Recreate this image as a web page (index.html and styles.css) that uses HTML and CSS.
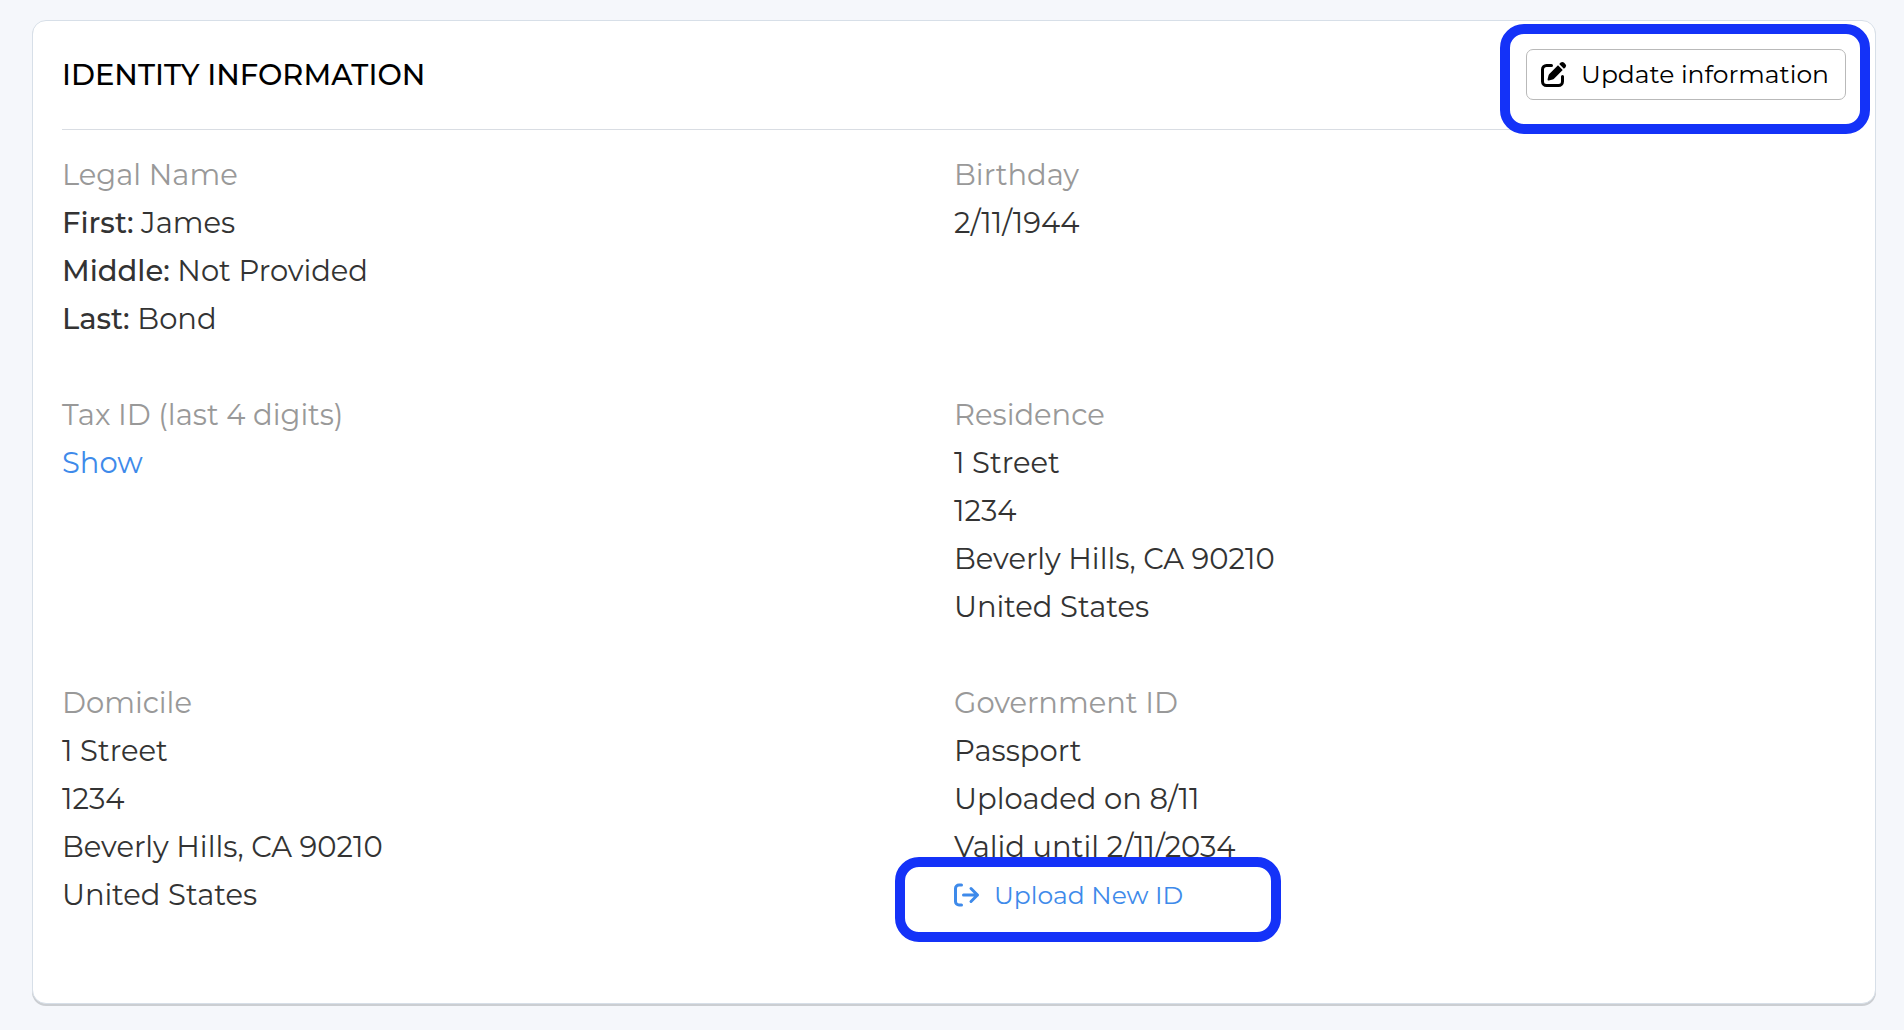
FILE: index.html
```html
<!DOCTYPE html>
<html lang="en">
<head>
<meta charset="utf-8">
<meta name="viewport" content="width=device-width, initial-scale=1">
<title>Identity Information</title>
<link rel="stylesheet" href="styles.css">
</head>
<body>
<main class="card">
  <header class="card-header">
    <h1 class="card-title">IDENTITY INFORMATION</h1>
    <div class="callout callout-update">
      <button class="update-button" type="button">
        <svg class="icon" viewBox="0 0 26 26" aria-hidden="true">
          <path d="M10.5 4.5H5.5A4 4 0 0 0 1.500 8.500V20.500A4 4 0 0 0 5.500 24.500H17.500A4 4 0 0 0 21.500 20.500V15.500" fill="none" stroke="currentColor" stroke-width="3" stroke-linecap="round"/>
          <path d="M17 4.300 21.700 9 13 17.700Q12.400 18.300 11.600 18.500L7.800 19.500Q6.300 19.700 6.600 18.200L7.500 14.500Q7.700 13.700 8.300 13.100ZM18.200 3.100 19.700 1.600Q21.300 .200 22.900 1.600L24.500 3.200Q25.900 4.800 24.400 6.400L22.900 7.800Z" fill="currentColor"/>
        </svg>
        <span>Update information</span>
      </button>
    </div>
  </header>

  <div class="details">
    <section class="field">
      <h2 class="label">Legal Name</h2>
      <p><b>First:</b> James</p>
      <p><b>Middle:</b> Not Provided</p>
      <p><b>Last:</b> Bond</p>
    </section>
    <section class="field">
      <h2 class="label">Birthday</h2>
      <p>2/11/1944</p>
    </section>
    <section class="field">
      <h2 class="label">Tax ID (last 4 digits)</h2>
      <p><a class="link" href="#">Show</a></p>
    </section>
    <section class="field">
      <h2 class="label">Residence</h2>
      <p>1 Street</p>
      <p>1234</p>
      <p>Beverly Hills, CA 90210</p>
      <p>United States</p>
    </section>
    <section class="field">
      <h2 class="label">Domicile</h2>
      <p>1 Street</p>
      <p>1234</p>
      <p>Beverly Hills, CA 90210</p>
      <p>United States</p>
    </section>
    <section class="field">
      <h2 class="label">Government ID</h2>
      <p>Passport</p>
      <p>Uploaded on 8/11</p>
      <p>Valid until 2/11/2034</p>
      <div class="callout callout-upload">
        <a class="link upload-link" href="#">
          <svg class="icon" viewBox="0 0 26 26" fill="none" stroke="currentColor" stroke-width="3" stroke-linecap="round" stroke-linejoin="round" aria-hidden="true">
            <path d="M7.500 3H5A3.500 3.500 0 0 0 1.500 6.500V19.500A3.500 3.500 0 0 0 5 23H7.500M9.500 13H23.500M17 6.500 23.500 13 17 19.500"/>
          </svg>
          <span>Upload New ID</span>
        </a>
      </div>
    </section>
  </div>
</main>
</body>
</html>
```
FILE: styles.css
```css
*,
*::after {
  box-sizing: border-box;
}

body {
  margin: 0;
  padding: 20px 28px 20px 32px;
  background: #f5f7fb;
  color: #333;
  font-family: Montserrat, Inter, sans-serif;
  font-size: 29px;
  line-height: 48px;
}

h1,
h2,
p {
  margin: 0;
  font-size: inherit;
  font-weight: 400;
}

b {
  font-weight: 500;
}

.card {
  padding: 28px 29px 36px;
  background: #fff;
  border: 1px solid #d7dfe8;
  border-radius: 14px;
  box-shadow: 0 2px 0 #cbced2;
}

.card-header {
  display: flex;
  align-items: center;
  justify-content: space-between;
  padding-bottom: 29px;
  border-bottom: 1px solid #d9dde3;
}

.card-title {
  color: #000;
  font-weight: 500;
}

.details {
  display: grid;
  grid-template-columns: 1fr 1fr;
  row-gap: 48px;
  padding: 21px 0 48px;
}

.label {
  color: #999;
}

.link {
  color: #3e8aea;
  text-decoration: none;
}

.icon {
  width: 26px;
  height: 26px;
  flex: none;
}

.update-button {
  display: flex;
  align-items: center;
  gap: 14px;
  height: 51px;
  padding: 0 16px 2px 14px;
  background: #fff;
  border: 1px solid #b9b9b9;
  border-radius: 7px;
  color: #000;
  font-family: inherit;
  font-size: 25px;
}

.upload-link {
  display: flex;
  align-items: center;
  gap: 14px;
  font-size: 25px;
}

/* Highlight frames drawn over the page around a control */
.callout {
  position: relative;
}

.callout::after {
  content: "";
  position: absolute;
  border: 10px solid #1432f8;
  border-radius: 24px;
  pointer-events: none;
}

.callout-update::after {
  inset: -25px -24px -34px -26px;
}

.callout-upload {
  width: fit-content;
}

.callout-upload::after {
  top: -14px;
  left: -59px;
  width: 386px;
  height: 85px;
}
```
